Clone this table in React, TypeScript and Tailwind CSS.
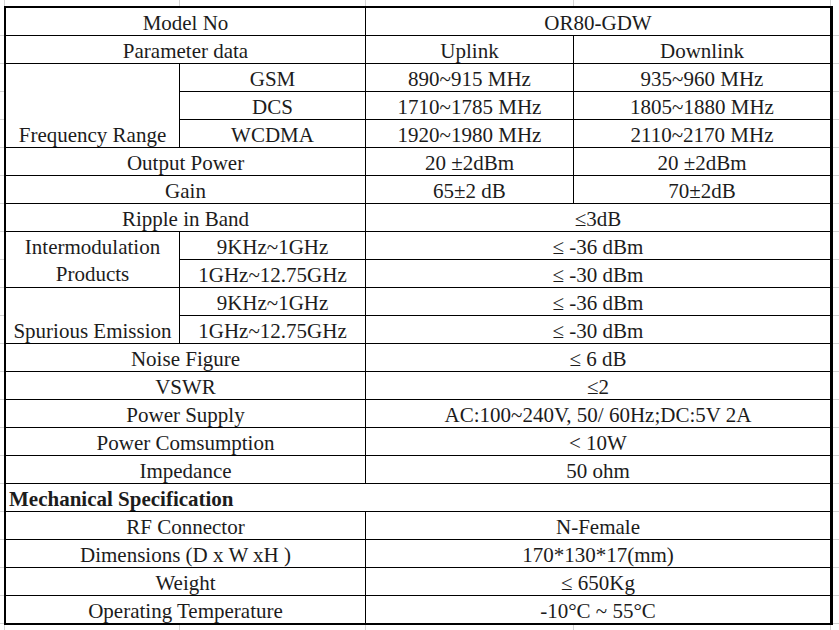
import React from "react";

type Cell = {
  t: React.ReactNode;
  c?: string;
};

const base =
  "bg-white flex items-end justify-center pb-[1px] leading-none whitespace-nowrap";

const rows: Cell[] = [
  { t: "Model No", c: "col-span-2" },
  { t: "OR80-GDW", c: "col-span-2" },
  { t: "Parameter data", c: "col-span-2" },
  { t: "Uplink" },
  { t: "Downlink" },
  { t: "Frequency Range", c: "row-span-3" },
  { t: "GSM" },
  { t: "890~915 MHz" },
  { t: "935~960 MHz" },
  { t: "DCS" },
  { t: "1710~1785 MHz" },
  { t: "1805~1880 MHz" },
  { t: "WCDMA" },
  { t: "1920~1980 MHz" },
  { t: "2110~2170 MHz" },
  { t: "Output Power", c: "col-span-2" },
  { t: "20 ±2dBm" },
  { t: "20 ±2dBm" },
  { t: "Gain", c: "col-span-2" },
  { t: "65±2 dB" },
  { t: "70±2dB" },
  { t: "Ripple in Band", c: "col-span-2" },
  { t: "≤3dB", c: "col-span-2" },
  {
    t: (
      <div className="flex flex-col items-center gap-[6px]">
        <span>Intermodulation</span>
        <span>Products</span>
      </div>
    ),
    c: "row-span-2 pb-[2px]",
  },
  { t: "9KHz~1GHz" },
  { t: "≤ -36 dBm", c: "col-span-2" },
  { t: "1GHz~12.75GHz" },
  { t: "≤ -30 dBm", c: "col-span-2" },
  { t: "Spurious Emission", c: "row-span-2" },
  { t: "9KHz~1GHz" },
  { t: "≤ -36 dBm", c: "col-span-2" },
  { t: "1GHz~12.75GHz" },
  { t: "≤ -30 dBm", c: "col-span-2" },
  { t: "Noise Figure", c: "col-span-2" },
  { t: "≤ 6 dB", c: "col-span-2" },
  { t: "VSWR", c: "col-span-2" },
  { t: "≤2", c: "col-span-2" },
  { t: "Power Supply", c: "col-span-2" },
  { t: "AC:100~240V, 50/ 60Hz;DC:5V 2A", c: "col-span-2" },
  { t: "Power Comsumption", c: "col-span-2" },
  { t: "< 10W", c: "col-span-2" },
  { t: "Impedance", c: "col-span-2" },
  { t: "50 ohm", c: "col-span-2" },
  {
    t: "Mechanical Specification",
    c: "col-span-4 !justify-start pl-[3px] font-bold",
  },
  { t: "RF Connector", c: "col-span-2" },
  { t: "N-Female", c: "col-span-2" },
  { t: "Dimensions (D x W xH )", c: "col-span-2" },
  { t: "170*130*17(mm)", c: "col-span-2" },
  { t: "Weight", c: "col-span-2" },
  { t: "≤ 650Kg", c: "col-span-2" },
  { t: "Operating Temperature", c: "col-span-2" },
  { t: "-10°C ~ 55°C", c: "col-span-2" },
];

function VStrip({ h }: { h: string }) {
  return (
    <div className={`flex ${h}`}>
      <div className="w-[4px]" />
      <div className="w-[175px] border-l border-[#d4d4d4]" />
      <div className="w-[186px] border-l border-[#d4d4d4]" />
      <div className="w-[208px] border-l border-[#d4d4d4]" />
      <div className="w-[257px] border-l border-[#d4d4d4]" />
      <div className="flex-1 border-l border-[#d4d4d4]" />
    </div>
  );
}

function HStrip({ w }: { w: string }) {
  return (
    <div className={`flex flex-col pt-[2px] ${w}`}>
      {Array.from({ length: 22 }).map((_, i) => (
        <div key={i} className="h-[28px] border-b border-[#d4d4d4]" />
      ))}
    </div>
  );
}

export default function App() {
  return (
    <div className="w-[839px] h-[630px] bg-white overflow-hidden flex flex-col font-['Liberation_Serif','Times_New_Roman',serif] text-[21px] text-[#1c1c1c]">
      <VStrip h="h-[6px]" />
      <div className="flex">
        <HStrip w="w-[4px]" />
        <div className="grid grid-cols-[173px_185px_207px_256px] grid-rows-[repeat(22,27px)] gap-px bg-black border-black border-l-2 border-t-2 border-b-2 border-r-[3px]">
          {rows.map((r, i) => (
            <div key={i} className={`${base} ${r.c ?? ""}`}>
              {r.t}
            </div>
          ))}
        </div>
        <HStrip w="flex-1" />
      </div>
      <VStrip h="flex-1" />
    </div>
  );
}
